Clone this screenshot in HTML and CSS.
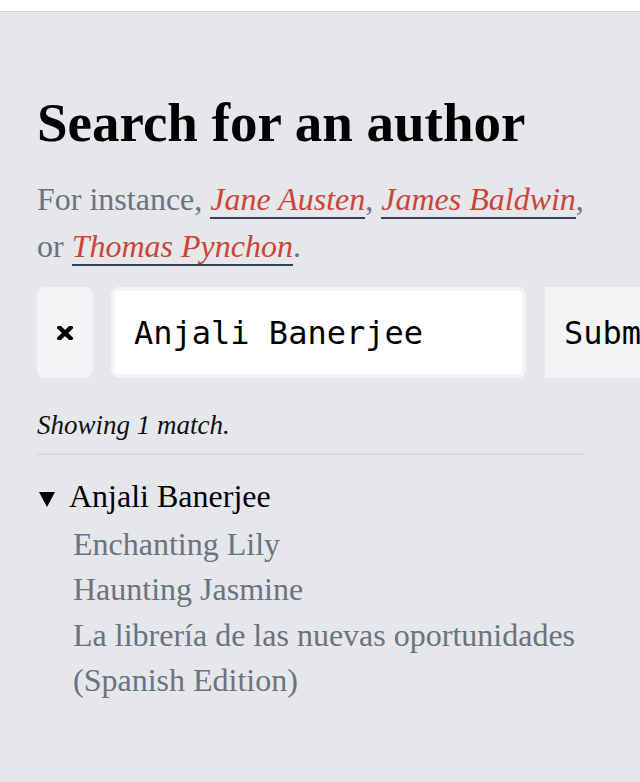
FILE: index.html
```html
<!DOCTYPE html>
<html lang="en">
<head>
<meta charset="utf-8">
<title>Search for an author</title>
<link rel="stylesheet" href="styles.css">
</head>
<body>
<div class="topbar"></div>
<main class="page">
  <h1 class="title">Search for an author</h1>
  <p class="intro">For instance, <a class="example" href="#">Jane Austen</a>, <a class="example" href="#">James Baldwin</a>, or <a class="example" href="#">Thomas Pynchon</a>.</p>
  <form class="search-row">
    <button type="button" class="clear-btn" aria-label="Clear">
      <svg class="clear-icon" width="16" height="14" viewBox="0 0 16 14"><path d="M2.4 1.6 L13.6 12.4 M13.6 1.6 L2.4 12.4" stroke="#000" stroke-width="4.4" stroke-linecap="square" fill="none"/></svg>
    </button>
    <input class="search-input" type="text" value="Anjali Banerjee">
    <button type="submit" class="submit-btn">Submit</button>
  </form>
  <p class="status">Showing 1 match.</p>
  <details class="author" open>
    <summary class="author-name"><svg class="caret" width="16" height="15" viewBox="0 0 16 15"><path d="M0 0 H16 L8 15 Z" fill="#000"/></svg><span>Anjali Banerjee</span></summary>
    <ul class="books">
      <li>Enchanting Lily</li>
      <li>Haunting Jasmine</li>
      <li>La librería de las nuevas oportunidades (Spanish Edition)</li>
    </ul>
  </details>
</main>
</body>
</html>
```
FILE: styles.css
```css
html, body {
  margin: 0;
  padding: 0;
}
body {
  background: #e5e7eb;
  font-family: "Liberation Serif", "Times New Roman", serif;
  color: #111;
  overflow-x: hidden;
}
.topbar {
  height: 11px;
  background: #ffffff;
  border-bottom: 1px solid #d1d5db;
}
.page {
  padding: 78px 0 40px 37px;
  max-width: 548px;
}
.title {
  margin: 0;
  font-size: 55px;
  line-height: 1.2;
  font-weight: 700;
  color: #000;
}
.intro {
  margin: 20px 0 0;
  font-size: 32px;
  line-height: 47px;
  color: #6b7280;
}
.example {
  color: #c9453a;
  font-style: italic;
  text-decoration: none;
  border-bottom: 2px solid #374151;
}
.search-row {
  margin: 17px 0 0;
  display: flex;
  height: 91px;
  width: 900px;
}
.clear-btn {
  flex: 0 0 56px;
  height: 91px;
  border: none;
  border-radius: 8px;
  background: #f3f4f6;
  padding: 0;
  display: flex;
  align-items: center;
  justify-content: center;
}
.clear-icon {
  display: block;
}
.search-input {
  flex: 0 0 415px;
  width: 415px;
  min-width: 0;
  box-sizing: border-box;
  height: 91px;
  margin-left: 18px;
  border: 4px solid #f3f4f6;
  border-radius: 8px;
  background: #fff;
  padding: 0 19px;
  font-family: "DejaVu Sans Mono", monospace;
  font-size: 32px;
  color: #000;
  outline: none;
}
.submit-btn {
  flex: 0 0 auto;
  height: 91px;
  margin-left: 19px;
  border: none;
  border-radius: 0;
  background: #f3f4f6;
  padding: 0 19px;
  font-family: "DejaVu Sans Mono", monospace;
  font-size: 32px;
  color: #000;
}
.status {
  margin: 29px 0 0;
  padding-bottom: 8px;
  border-bottom: 2px solid #d8dade;
  font-size: 27px;
  line-height: 1.4;
  font-style: italic;
  color: #111;
}
.author {
  margin-top: 19px;
}
.author-name {
  list-style: none;
  display: block;
  font-size: 32px;
  line-height: 45.4px;
  color: #000;
  cursor: pointer;
}
.author-name::-webkit-details-marker {
  display: none;
}
.caret {
  margin: 0 14px 0 2px;
  vertical-align: baseline;
}
.books {
  list-style: none;
  margin: 2.6px 0 0;
  padding: 0 0 0 36px;
  font-size: 32px;
  line-height: 45.4px;
  color: #6b7280;
}
```
